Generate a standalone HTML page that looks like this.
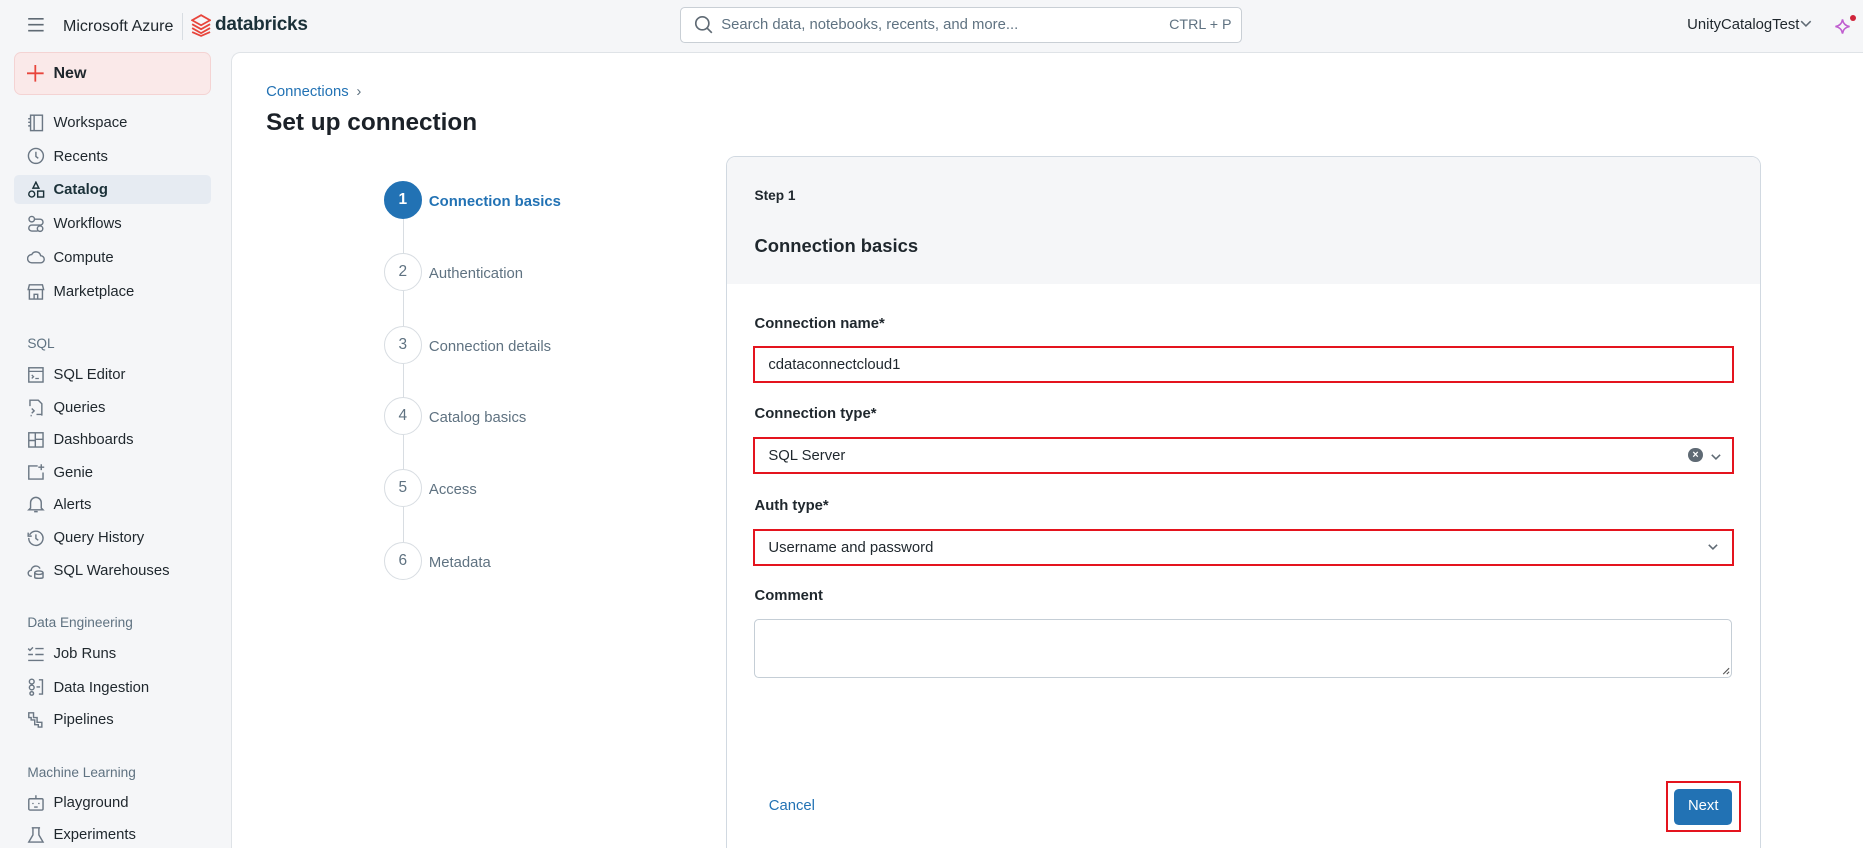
<!DOCTYPE html>
<html><head><meta charset="utf-8"><style>
html{zoom:1.18815;overflow:hidden;height:714px}
*{box-sizing:border-box;margin:0;padding:0}
body{width:1568px;height:714px;overflow:hidden;background:#f5f6f8;font-family:"Liberation Sans",Arial,sans-serif;color:#1f272d;font-size:13px;position:relative}
.a{position:absolute}
.t{margin-top:2px}
.nav{position:absolute;left:45px;font-size:12.5px;color:#1f272d;white-space:nowrap;margin-top:2px}
.ic{position:absolute;left:23px;width:15px;height:15px}
.sec{position:absolute;left:23px;font-size:11.5px;color:#5f7281;margin-top:2px}
.circ{position:absolute;left:323px;width:32px;height:32px;border-radius:50%;border:1px solid #d8dde2;background:#fff;color:#5f7281;font-size:13px;text-align:center;line-height:30px}
.slab{position:absolute;left:361px;font-size:12.5px;color:#5f7281;margin-top:2px}
.vl{position:absolute;left:339px;width:1px;background:#d8dde2;height:29px}
.lbl{position:absolute;left:635px;font-size:12.5px;font-weight:bold;color:#1f272d;margin-top:2px}
.inp{position:absolute;left:634px;width:825px;height:31px;border:2px solid #e4141e;background:#fff;font-size:12.5px;padding-left:11px;line-height:29px}
</style></head><body>
<!-- top bar -->
<svg class="a" style="left:23px;top:14px" width="15" height="13" viewBox="0 0 15 13"><path d="M1 1.5h13M1 6.5h13M1 11.5h13" stroke="#5f6a74" stroke-width="1.4"/></svg>
<div class="a t" style="left:53px;top:12px;font-size:13.5px;color:#1f272d">Microsoft Azure</div>
<div class="a" style="left:153px;top:11px;width:1px;height:23px;background:#d8dde2"></div>
<svg class="a" style="left:161px;top:12px" width="17" height="19" viewBox="0 0 18 20"><path d="M9 1L17 5.5 9 10 1 5.5zM1 9l8 4.5 8-4.5M1 12.5l8 4.5 8-4.5M1 16l8 3.5 8-3.5" fill="none" stroke="#e8453c" stroke-width="1.6"/></svg>
<div class="a t" style="left:181px;top:10px;font-size:16px;font-weight:bold;color:#1b3139;letter-spacing:-0.2px">databricks</div>
<div class="a" style="left:572px;top:6px;width:473px;height:30px;border:1px solid #c9cfd5;border-radius:4px;background:#fff"></div>
<svg class="a" style="left:584px;top:13px" width="16" height="16" viewBox="0 0 16 16"><circle cx="7" cy="7" r="5.5" fill="none" stroke="#5f6a74" stroke-width="1.4"/><path d="M11 11l4 4" stroke="#5f6a74" stroke-width="1.4"/></svg>
<div class="a t" style="left:607px;top:12px;font-size:12.5px;color:#5f7281">Search data, notebooks, recents, and more...</div>
<div class="a t" style="left:984px;top:12px;font-size:12px;color:#5f7281">CTRL + P</div>
<div class="a t" style="left:1420px;top:12px;font-size:12.5px;color:#1f272d">UnityCatalogTest</div>
<svg class="a" style="left:1515px;top:17px" width="10" height="7" viewBox="0 0 10 7"><path d="M1 1l4 4 4-4" fill="none" stroke="#5f6a74" stroke-width="1.3"/></svg>
<svg class="a" style="left:1543px;top:14px" width="16" height="16" viewBox="0 0 16 16"><path d="M8 2Q8.8 7.2 14 8 8.8 8.8 8 14 7.2 8.8 2 8 7.2 7.2 8 2z" fill="none" stroke="#c05fd0" stroke-width="1.3"/></svg>
<div class="a" style="left:1557px;top:13px;width:5px;height:5px;border-radius:50%;background:#d0243b"></div>
<!-- sidebar -->
<div class="a" style="left:12px;top:44px;width:166px;height:36px;background:#fae9e9;border:1px solid #f4d3d3;border-radius:6px"></div>
<svg class="a" style="left:23px;top:55px" width="14" height="14" viewBox="0 0 14 14"><path d="M7 0v14M0 7h14" stroke="#e8453c" stroke-width="1.5"/></svg>
<div class="a" style="left:45px;top:54px;font-size:13.5px;font-weight:bold;color:#1f272d">New</div>
<div class="a" style="left:12px;top:147px;width:166px;height:25px;background:#e6ebf2;border-radius:4px"></div>
<svg class="ic" style="top:96px" viewBox="0 0 15 15"><rect x="3" y="1" width="10" height="13" fill="none" stroke="#6b7784" stroke-width="1.2"/><path d="M6 1v13M1 4h2M1 7h2M1 10h2" stroke="#6b7784" stroke-width="1.2"/></svg>
<div class="nav" style="top:95px">Workspace</div>
<svg class="ic" style="top:124px" viewBox="0 0 15 15"><circle cx="7.5" cy="7.5" r="6.3" fill="none" stroke="#6b7784" stroke-width="1.2"/><path d="M7.5 4v4l2 1.5" fill="none" stroke="#6b7784" stroke-width="1.2"/></svg>
<div class="nav" style="top:123px">Recents</div>
<svg class="ic" style="top:152px" viewBox="0 0 15 15"><path d="M7.5 1L10 6H5z" fill="none" stroke="#1b3139" stroke-width="1.2"/><circle cx="4" cy="11" r="2.5" fill="none" stroke="#1b3139" stroke-width="1.2"/><rect x="9" y="8.5" width="5" height="5" fill="none" stroke="#1b3139" stroke-width="1.2"/></svg>
<div class="nav" style="top:151px;font-weight:bold;color:#1b3139">Catalog</div>
<svg class="ic" style="top:181px" viewBox="0 0 15 15"><circle cx="4" cy="3.5" r="2.3" fill="none" stroke="#6b7784" stroke-width="1.2"/><circle cx="11" cy="11.5" r="2.3" fill="none" stroke="#6b7784" stroke-width="1.2"/><path d="M6 3.5h5a2.5 2.5 0 010 5H4a2.5 2.5 0 000 5h5" fill="none" stroke="#6b7784" stroke-width="1.2"/></svg>
<div class="nav" style="top:180px">Workflows</div>
<svg class="ic" style="top:209px" viewBox="0 0 15 15"><path d="M4 12.5h7.5a3 3 0 000-6 4 4 0 00-7.5-1A3.3 3.3 0 004 12.5z" fill="none" stroke="#6b7784" stroke-width="1.2"/></svg>
<div class="nav" style="top:208px">Compute</div>
<svg class="ic" style="top:238px" viewBox="0 0 15 15"><path d="M2 1.5h11l1 4H1zM2 6v7.5h11V6M6 13.5v-4h3v4" fill="none" stroke="#6b7784" stroke-width="1.2"/></svg>
<div class="nav" style="top:237px">Marketplace</div>
<div class="sec" style="top:281px">SQL</div>
<svg class="ic" style="top:308px" viewBox="0 0 15 15"><rect x="1.5" y="1.5" width="12" height="12" fill="none" stroke="#6b7784" stroke-width="1.2"/><path d="M1.5 4.5h12M4 7.5l1.5 1.5L4 10.5M7 10.5h3" fill="none" stroke="#6b7784" stroke-width="1.1"/></svg>
<div class="nav" style="top:307px">SQL Editor</div>
<svg class="ic" style="top:336px" viewBox="0 0 15 15"><path d="M2.5 6V1h7l3 3v10M3 14h1M4 8l2 2-2 2M8 13h4" fill="none" stroke="#6b7784" stroke-width="1.2"/></svg>
<div class="nav" style="top:335px">Queries</div>
<svg class="ic" style="top:363px" viewBox="0 0 15 15"><rect x="1.5" y="1.5" width="12" height="12" fill="none" stroke="#6b7784" stroke-width="1.2"/><path d="M7 1.5v12M7 7h6.5M1.5 8h5.5" stroke="#6b7784" stroke-width="1.2"/></svg>
<div class="nav" style="top:362px">Dashboards</div>
<svg class="ic" style="top:390px" viewBox="0 0 15 15"><path d="M9 2.5H1.5v11h12V8" fill="none" stroke="#6b7784" stroke-width="1.2"/><path d="M12 1v5M9.5 3.5h5" stroke="#6b7784" stroke-width="1.2"/></svg>
<div class="nav" style="top:389px">Genie</div>
<svg class="ic" style="top:417px" viewBox="0 0 15 15"><path d="M3 11V6.5a4.5 4.5 0 019 0V11l1.5 1.5h-12zM6 14h3" fill="none" stroke="#6b7784" stroke-width="1.2"/></svg>
<div class="nav" style="top:416px">Alerts</div>
<svg class="ic" style="top:445px" viewBox="0 0 15 15"><path d="M2.2 5A6 6 0 111.5 7.5M1 3v3h3M7.5 4.5V8l2 1.5" fill="none" stroke="#6b7784" stroke-width="1.2"/></svg>
<div class="nav" style="top:444px">Query History</div>
<svg class="ic" style="top:473px" viewBox="0 0 15 15"><path d="M4 12H3.5a2.5 2.5 0 010-5A4 4 0 0111 5.5" fill="none" stroke="#6b7784" stroke-width="1.2"/><ellipse cx="10" cy="9" rx="3.5" ry="1.5" fill="none" stroke="#6b7784" stroke-width="1.2"/><path d="M6.5 9v4c0 1 7 1 7 0V9" fill="none" stroke="#6b7784" stroke-width="1.2"/></svg>
<div class="nav" style="top:472px">SQL Warehouses</div>
<div class="sec" style="top:516px">Data Engineering</div>
<svg class="ic" style="top:543px" viewBox="0 0 15 15"><path d="M1 3l1.5 1.5L5 2M7 3h7M7 8h7M1 8h4M1 13h13" fill="none" stroke="#6b7784" stroke-width="1.2"/></svg>
<div class="nav" style="top:542px">Job Runs</div>
<svg class="ic" style="top:571px" viewBox="0 0 15 15"><circle cx="4" cy="3" r="2" fill="none" stroke="#6b7784" stroke-width="1.2"/><circle cx="4" cy="8" r="2" fill="none" stroke="#6b7784" stroke-width="1.2"/><circle cx="4" cy="13" r="1.5" fill="none" stroke="#6b7784" stroke-width="1.2"/><path d="M10 1.5h3v12h-3M8 7.5h3" fill="none" stroke="#6b7784" stroke-width="1.2"/></svg>
<div class="nav" style="top:570px">Data Ingestion</div>
<svg class="ic" style="top:598px" viewBox="0 0 15 15"><path d="M1.5 1.5h4v4h3v4h4v4h-3v-2h-3v-4h-3v-2h-2z" fill="none" stroke="#6b7784" stroke-width="1.2"/></svg>
<div class="nav" style="top:597px">Pipelines</div>
<div class="sec" style="top:642px">Machine Learning</div>
<svg class="ic" style="top:668px" viewBox="0 0 15 15"><rect x="1.5" y="4" width="12" height="9.5" rx="1" fill="none" stroke="#6b7784" stroke-width="1.2"/><path d="M7.5 1v3M5 7.5v1M10 7.5v1M6 11h3" stroke="#6b7784" stroke-width="1.2"/></svg>
<div class="nav" style="top:667px">Playground</div>
<svg class="ic" style="top:695px" viewBox="0 0 15 15"><path d="M4 1.5h7M5 1.5v6L1.5 13.5h12L10 7.5v-6" fill="none" stroke="#6b7784" stroke-width="1.2"/></svg>
<div class="nav" style="top:694px">Experiments</div>
<!-- main -->
<div class="a" style="left:194px;top:44px;width:1374px;height:670px;background:#fff;border:1px solid #dfe3e7;border-bottom:none;border-right:none;border-radius:8px 0 0 0"></div>
<div class="a t" style="left:224px;top:69px;font-size:12.5px;color:#2272b4">Connections <span style="color:#5f7281;margin-left:3px">›</span></div>
<div class="a t" style="left:224px;top:90px;font-size:20.5px;font-weight:bold;color:#1b2128">Set up connection</div>
<!-- stepper -->
<div class="circ" style="top:152px;background:#2272b4;border-color:#2272b4;color:#fff;font-weight:bold">1</div>
<div class="slab" style="top:161px;color:#2272b4;font-weight:bold">Connection basics</div>
<div class="vl" style="top:184px"></div>
<div class="circ" style="top:213px">2</div><div class="slab" style="top:222px">Authentication</div>
<div class="vl" style="top:245px"></div>
<div class="circ" style="top:274px">3</div><div class="slab" style="top:283px">Connection details</div>
<div class="vl" style="top:306px"></div>
<div class="circ" style="top:334px">4</div><div class="slab" style="top:343px">Catalog basics</div>
<div class="vl" style="top:366px"></div>
<div class="circ" style="top:395px">5</div><div class="slab" style="top:404px">Access</div>
<div class="vl" style="top:427px"></div>
<div class="circ" style="top:456px">6</div><div class="slab" style="top:465px">Metadata</div>
<!-- card -->
<div class="a" style="left:611px;top:131px;width:871px;height:583px;border:1px solid #d1d9e1;border-bottom:none;border-radius:8px 8px 0 0;background:#fff;overflow:hidden"><div style="height:107px;background:#f5f6f8"></div></div>
<div class="a t" style="left:635px;top:156px;font-size:11.5px;font-weight:bold">Step 1</div>
<div class="a t" style="left:635px;top:196px;font-size:15.5px;font-weight:bold">Connection basics</div>
<div class="lbl" style="top:264px">Connection name*</div>
<div class="inp" style="top:291px">cdataconnectcloud1</div>
<div class="lbl" style="top:340px">Connection type*</div>
<div class="inp" style="top:368px">SQL Server</div>
<div class="a" style="left:1421px;top:377px;width:12px;height:12px;border-radius:50%;background:#5f6a74;color:#fff;font-size:9px;line-height:12px;text-align:center;font-weight:bold">×</div>
<svg class="a" style="left:1439px;top:381px" width="10" height="7" viewBox="0 0 10 7"><path d="M1.5 1.5l3.5 3.5 3.5-3.5" fill="none" stroke="#5f6a74" stroke-width="1.3"/></svg>
<div class="lbl" style="top:417px">Auth type*</div>
<div class="inp" style="top:445px">Username and password</div>
<svg class="a" style="left:1437px;top:457px" width="10" height="7" viewBox="0 0 10 7"><path d="M1.5 1.5l3.5 3.5 3.5-3.5" fill="none" stroke="#5f6a74" stroke-width="1.3"/></svg>
<div class="lbl" style="top:493px">Comment</div>
<div class="a" style="left:635px;top:521px;width:823px;height:50px;border:1px solid #c5ced6;border-radius:4px"></div>
<svg class="a" style="left:1449px;top:561px" width="7" height="7" viewBox="0 0 7 7"><path d="M1 6L6 1M4 6l2-2" stroke="#555" stroke-width="0.9"/></svg>
<div class="a t" style="left:647px;top:670px;font-size:12.5px;color:#2272b4">Cancel</div>
<div class="a" style="left:1402px;top:657px;width:63px;height:43px;border:2px solid #e4141e"></div>
<div class="a" style="left:1409px;top:664px;width:49px;height:30px;background:#2272b4;border-radius:4px;color:#fff;font-size:12.5px;text-align:center;line-height:30px">Next</div>
</body></html>
